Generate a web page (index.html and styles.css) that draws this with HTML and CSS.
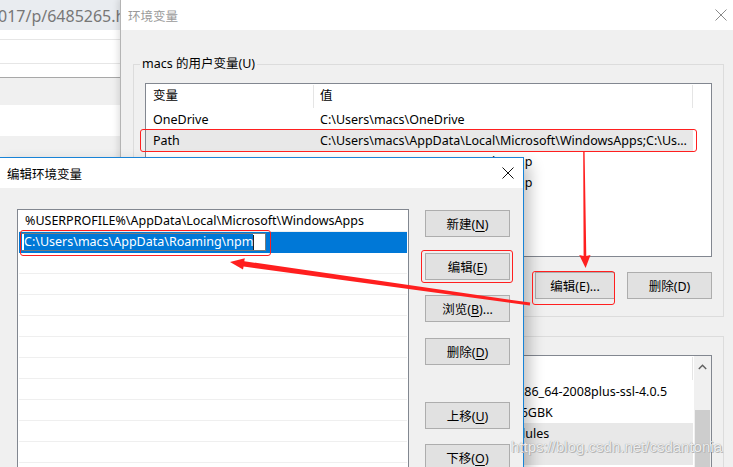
FILE: index.html
```html
<!DOCTYPE html>
<html lang="zh-CN">
<head>
  <meta charset="UTF-8">
  <title>编辑环境变量</title>
  <meta name="viewport" content="width=device-width, initial-scale=1.0">
  <link rel="stylesheet" href="styles.css">
</head>
<body>
  <div class="desktop">
    <!-- browser window in the background -->
    <div class="browser">
      <div class="addr">017/p/6485265.html</div>
      <div class="pg pg-a"></div>
      <div class="pg pg-b"></div>
      <div class="pg pg-c"></div>
      <div class="pg pg-band"></div>
      <div class="pg pg-white"></div>
    </div>

    <!-- 环境变量 dialog -->
    <div class="win env">
      <div class="titlebar">
        <span class="title">环境变量</span>
        <svg class="close" viewBox="0 0 12 12"><path d="M0.5,0.5 L11.5,11.5 M11.5,0.5 L0.5,11.5"/></svg>
      </div>
      <div class="win-body">
        <fieldset class="group">
          <legend>macs 的用户变量(U)</legend>
          <div class="lv">
            <div class="lv-head"><span class="col-a">变量</span><span class="col-b">值</span></div>
            <div class="lv-row"><span class="col-a">OneDrive</span><span class="col-b">C:\Users\macs\OneDrive</span></div>
            <div class="lv-row sel"><span class="col-a">Path</span><span class="col-b">C:\Users\macs\AppData\Local\Microsoft\WindowsApps;C:\Users\macs\AppData\Roaming\npm</span></div>
            <div class="lv-row"><span class="col-a">TEMP</span><span class="col-b">C:\Users\macs\AppData\Local\Temp</span></div>
            <div class="lv-row"><span class="col-a">TMP</span><span class="col-b">C:\Users\macs\AppData\Local\Temp</span></div>
          </div>
          <div class="btns">
            <button class="btn btn-edit">编辑(E)...</button>
            <button class="btn">删除(D)</button>
          </div>
        </fieldset>
        <fieldset class="group">
          <legend>系统变量(S)</legend>
          <div class="lv lv-sys">
            <div class="lv-main">
              <div class="lv-head"><span class="col-a">变量</span><span class="col-b">值</span></div>
              <div class="lv-row"><span class="col-a">MONGO_HOME</span><span class="col-b">E:\Programs\db\mongodb-win32-x86_64-2008plus-ssl-4.0.5</span></div>
              <div class="lv-row"><span class="col-a">NLS_LANG</span><span class="col-b">SIMPLIFIED CHINESE_CHINA.ZHS16GBK</span></div>
              <div class="lv-row sel"><span class="col-a">NODE_PATH</span><span class="col-b">D:\Node.js\node_global\node_modules</span></div>
              <div class="lv-row sel"></div>
            </div>
            <div class="vscroll">
              <svg class="up" viewBox="0 0 9 6"><path d="M0.8,5 L4.5,1.2 L8.2,5"/></svg>
              <div class="thumb"></div>
            </div>
          </div>
        </fieldset>
      </div>
    </div>

    <!-- 编辑环境变量 dialog -->
    <div class="win edit">
      <div class="titlebar">
        <span class="title active">编辑环境变量</span>
        <svg class="close dark" viewBox="0 0 12 12"><path d="M0.5,0.5 L11.5,11.5 M11.5,0.5 L0.5,11.5"/></svg>
      </div>
      <div class="win-body edit-body">
        <div class="pathlist">
          <div class="pl-row">%USERPROFILE%\AppData\Local\Microsoft\WindowsApps</div>
          <div class="pl-row sel">
            <span class="editbox"><span class="seltext">C:\Users\macs\AppData\Roaming\npm</span><span class="caret"></span></span>
          </div>
          <div class="pl-row"></div>
          <div class="pl-row"></div>
          <div class="pl-row"></div>
          <div class="pl-row"></div>
          <div class="pl-row"></div>
          <div class="pl-row"></div>
          <div class="pl-row"></div>
          <div class="pl-row"></div>
          <div class="pl-row"></div>
          <div class="pl-row"></div>
        </div>
        <div class="side">
          <button class="btn">新建(<u>N</u>)</button>
          <button class="btn">编辑(<u>E</u>)</button>
          <button class="btn gap-s">浏览(<u>B</u>)...</button>
          <button class="btn">删除(<u>D</u>)</button>
          <button class="btn gap-l">上移(<u>U</u>)</button>
          <button class="btn gap-s">下移(<u>O</u>)</button>
        </div>
      </div>
    </div>

    <!-- red annotations -->
    <div class="mark mark-path"></div>
    <div class="mark mark-edit1"></div>
    <div class="mark mark-edit2"></div>
    <div class="mark mark-box"></div>
    <svg class="arrows" viewBox="0 0 733 467">
      <polygon points="583.2,152 584.6,152 586.3,256 590.5,255 585.6,268 579.2,255 583.6,256"/>
      <polygon points="530.2,302.6 244.3,261.2 244.8,258.2 230,262 243,269.6 243.6,266.6 529.8,305.4"/>
    </svg>

    <div class="watermark">https://blog.csdn.net/csdantonia</div>
  </div>
</body>
</html>
```

FILE: styles.css
```css
* {
  box-sizing: border-box;
}

body {
  margin: 0;
  background: #f0f0f0;
  color: #000;
  font-family: "Noto Sans", "Noto Sans CJK SC", sans-serif;
  font-size: 12.5px;
  overflow: hidden;
}

.desktop {
  position: relative;
  width: 733px;
  height: 467px;
  overflow: hidden;
}

/* background browser */
.browser {
  position: absolute;
  left: 0;
  top: 0;
  width: 125px;
  height: 467px;
  background: #f0f0f0;
}
.addr {
  height: 30px;
  background: #e9ecf0;
  color: #777;
  font-size: 16px;
  line-height: 32px;
  margin-left: -2px;
  white-space: nowrap;
}
.pg {
  background: #fff;
  border-bottom: 1px solid #e6e6e6;
}
.pg-a { height: 10px; }
.pg-b { height: 24px; }
.pg-c { height: 14px; border-bottom-color: #a8a8a8; }
.pg-band { height: 27px; background: #f0f0f0; border: 0; }
.pg-white { height: 31px; border: 0; }

/* windows */
.win {
  position: absolute;
  background: #f0f0f0;
  display: flex;
  flex-direction: column;
}
.env {
  left: 120px;
  top: -1px;
  width: 617px;
  height: 490px;
  border: 1px solid #b4b4b4;
  box-shadow: -2px 0 6px rgba(0, 0, 0, 0.12);
}
.edit {
  left: -1px;
  top: 157px;
  width: 525px;
  height: 330px;
  border: 1px solid #1883d7;
  box-shadow: 6px 7px 14px rgba(0, 0, 0, 0.24);
}

.titlebar {
  flex: none;
  height: 30px;
  background: #fff;
  display: flex;
  align-items: center;
  justify-content: space-between;
  padding: 0 9px 0 7px;
}
.title {
  color: #9a9a9a;
  font-size: 12.5px;
}
.title.active {
  color: #000;
}
.close {
  width: 12px;
  height: 12px;
}
.close path {
  stroke: #8a8a8a;
  stroke-width: 1;
  fill: none;
}
.close.dark path {
  stroke: #111;
}

/* group boxes */
.group {
  margin: 26px 12px 0;
  padding: 11px 11px 17px;
  border: 1px solid #dcdcdc;
  min-width: 0;
}
.group + .group {
  margin-top: 11px;
}
.group legend {
  padding: 0 2px;
  margin-left: -5px;
  line-height: 16px;
}

/* list views */
.lv {
  height: 174px;
  padding-top: 1px;
  background: #fff;
  border: 1px solid #828790;
  overflow: hidden;
}
.lv-head,
.lv-row {
  display: flex;
  width: 547px;
  white-space: nowrap;
}
.lv-head {
  height: 24px;
}
.lv-head span {
  height: 23px;
  line-height: 22px;
  border-right: 1px solid #e5e5e5;
}
.lv-row {
  height: 21px;
  line-height: 21px;
}
.lv-row.sel {
  background: #e8e8e8;
}
.col-a {
  width: 168px;
  padding-left: 7px;
  overflow: hidden;
}
.col-b {
  width: 379px;
  padding-left: 6px;
  overflow: hidden;
  text-overflow: ellipsis;
}

.lv-sys {
  display: flex;
  height: 140px;
  padding-top: 0;
}
.lv-sys .lv-main {
  width: 548px;
  padding-top: 1px;
}
.vscroll {
  width: 17px;
  background: #f0f0f0;
  display: flex;
  flex-direction: column;
  align-items: center;
}
.vscroll .up {
  width: 9px;
  height: 6px;
  margin-top: 8px;
}
.vscroll .up path {
  fill: none;
  stroke: #606060;
  stroke-width: 1.4;
}
.thumb {
  width: 15px;
  height: 80px;
  margin-top: 40px;
  background: #cdcdcd;
}

/* buttons */
.btn {
  width: 85px;
  height: 27px;
  padding: 0;
  background: #e1e1e1;
  border: 1px solid #adadad;
  color: #000;
  font: inherit;
}
.btn u {
  text-underline-offset: 2px;
}
.btns {
  display: flex;
  justify-content: flex-end;
  gap: 12px;
  margin-top: 15px;
}
.btn-edit {
  width: 80px;
}

/* edit dialog */
.edit-body {
  display: flex;
  gap: 16px;
  padding: 21px 0 0 17px;
}
.pathlist {
  width: 392px;
  height: 300px;
  padding-top: 1px;
  background: #fff;
  border: 1px solid #828790;
}
.pl-row {
  height: 21px;
  line-height: 20px;
  margin: 0 1px;
  padding-left: 6px;
  border-bottom: 1px solid #efefef;
  white-space: nowrap;
}
.pl-row.sel {
  background: #0078d7;
  border-bottom-color: #0078d7;
  padding: 1px 0 0 2px;
}
.editbox {
  display: flex;
  align-items: center;
  width: 245px;
  height: 18px;
  padding-left: 2px;
  background: #fff;
  border: 1px solid #7a7a7a;
  border-left-color: #0078d7;
}
.seltext {
  background: #0078d7;
  color: #fff;
  line-height: 16px;
}
.caret {
  width: 1px;
  height: 15px;
  background: #222;
}
.side {
  display: flex;
  flex-direction: column;
  width: 85px;
  padding-top: 1px;
}
.side .btn + .btn {
  margin-top: 16px;
}
.side .btn.gap-s {
  margin-top: 15px;
}
.side .btn.gap-l {
  margin-top: 37px;
}

/* annotations */
.mark {
  position: absolute;
  border: 1.5px solid #ff1f1f;
  border-radius: 3px;
}
.mark-path { left: 140px; top: 129px; width: 557px; height: 23px; }
.mark-edit1 { left: 532px; top: 271px; width: 83px; height: 34px; }
.mark-edit2 { left: 421px; top: 250px; width: 92px; height: 33px; }
.mark-box { left: 20px; top: 230px; width: 251px; height: 26px; }

.arrows {
  position: absolute;
  left: 0;
  top: 0;
  width: 733px;
  height: 467px;
}
.arrows polygon {
  fill: #ff1f1f;
}

.watermark {
  position: absolute;
  left: 511px;
  top: 438px;
  font-family: "Liberation Sans", sans-serif;
  font-size: 15px;
  color: rgba(255, 255, 255, 0.85);
  text-shadow: 0 0 1px #888, 1px 1px 0 #bbb;
}
```
